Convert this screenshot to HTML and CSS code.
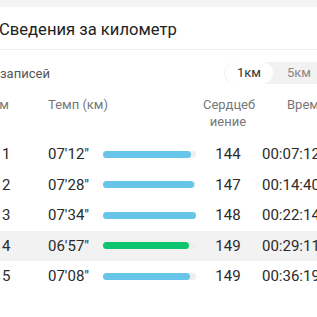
FILE: index.html
```html
<!DOCTYPE html>
<html lang="ru">
<head>
<meta charset="utf-8">
<link rel="stylesheet" href="styles.css">
</head>
<body>
<div class="page">
  <div class="topbar"></div>
  <div class="content">
    <div class="title">Сведения за километр</div>
    <div class="filter">
      <span class="records">записей</span>
      <div class="toggle">
        <span class="opt active">1км</span>
        <span class="opt">5км</span>
      </div>
    </div>
    <div class="row head">
      <div class="c-num">Км</div>
      <div class="c-pace wide">Темп (км)</div>
      <div class="c-hr">Сердцеб<br>иение</div>
      <div class="c-time">Время</div>
    </div>
    <div class="rows">
      <div class="row">
        <div class="c-num">1</div><div class="c-pace">07'12"</div>
        <div class="c-bar"><div class="track"><div class="fill" style="width:95%"></div></div></div>
        <div class="c-hr">144</div><div class="c-time">00:07:12</div>
      </div>
      <div class="row">
        <div class="c-num">2</div><div class="c-pace">07'28"</div>
        <div class="c-bar"><div class="track"><div class="fill" style="width:98%"></div></div></div>
        <div class="c-hr">147</div><div class="c-time">00:14:40</div>
      </div>
      <div class="row">
        <div class="c-num">3</div><div class="c-pace">07'34"</div>
        <div class="c-bar"><div class="track"><div class="fill" style="width:100%"></div></div></div>
        <div class="c-hr">148</div><div class="c-time">00:22:14</div>
      </div>
      <div class="row best">
        <div class="c-num">4</div><div class="c-pace">06'57"</div>
        <div class="c-bar"><div class="track"><div class="fill green" style="width:92%"></div></div></div>
        <div class="c-hr">149</div><div class="c-time">00:29:11</div>
      </div>
      <div class="row">
        <div class="c-num">5</div><div class="c-pace">07'08"</div>
        <div class="c-bar"><div class="track"><div class="fill" style="width:94%"></div></div></div>
        <div class="c-hr">149</div><div class="c-time">00:36:19</div>
      </div>
    </div>
  </div>
</div>
</body>
</html>
```
FILE: styles.css
```css
html, body {
  margin: 0;
  padding: 0;
  background: #ffffff;
}
body {
  font-family: Roboto, "Noto Sans", sans-serif;
  color: #2b2b2b;
}
.page {
  width: 317px;
  height: 317px;
  overflow: hidden;
  background: #ffffff;
}
.topbar {
  height: 7px;
  background: #f4f4f4;
}
.content {
  margin-left: -12px;
  width: 360px;
}
.title {
  height: 42px;
  line-height: 46px;
  font-size: 16.6px;
  color: #222222;
  padding-left: 11px;
  border-bottom: 1px solid #eeeeee;
}
.filter {
  height: 46px;
  display: flex;
  align-items: center;
  padding-left: 12px;
}
.records {
  flex: 1;
  font-size: 13px;
  color: #555555;
}
.toggle {
  display: flex;
  align-items: center;
  height: 22px;
  width: 123px;
  border-radius: 11px;
  background: #f2f2f2;
  padding-left: 1px;
}
.opt {
  font-size: 13px;
  color: #888888;
  height: 22px;
  line-height: 22px;
  width: 48px;
  text-align: center;
  border-radius: 11px;
}
.opt.active {
  background: #ffffff;
  color: #333333;
  margin-right: 2px;
}
.row {
  display: grid;
  grid-template-columns: 60px 55px 100px 50px 1fr;
  align-items: center;
  height: 30.5px;
  font-size: 15px;
}
.row.head {
  height: auto;
  align-items: start;
  font-size: 13px;
  line-height: 17px;
  color: #777777;
  margin-bottom: 9px;
}
.wide {
  grid-column: span 2;
}
.row.best {
  background: #f2f2f2;
}
.c-num {
  padding-left: 14px;
}
.head .c-num {
  padding-left: 3px;
}
.c-hr {
  text-align: center;
}
.c-time {
  padding-left: 9px;
}
.head .c-time {
  padding-left: 34px;
}
.track {
  width: 93px;
  height: 7px;
  border-radius: 4px;
  background: #eeeeee;
}
.fill {
  height: 7px;
  border-radius: 4px;
  background: #67c5ea;
}
.fill.green {
  background: #0ec46e;
}
```
